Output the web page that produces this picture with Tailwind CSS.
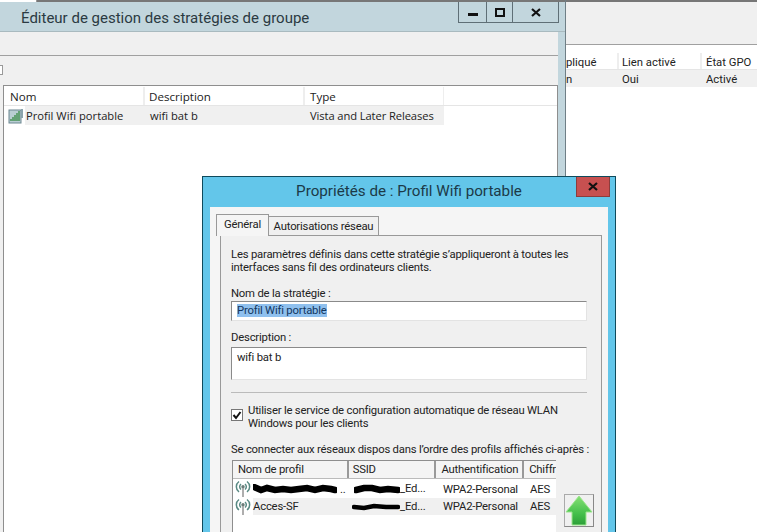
<!DOCTYPE html>
<html lang="fr">
<head>
    <meta charset="UTF-8">
    <title>Propriétés de : Profil Wifi portable</title>
    <script src="https://cdn.jsdelivr.net/npm/@tailwindcss/browser@4"></script>
</head>
<body class="bg-white">
<div class="relative w-[757px] h-[532px] overflow-hidden bg-white font-['Roboto',sans-serif] text-[11.3px] text-[#222]">

    <!-- Window behind: links list -->
    <div class="absolute left-[566px] top-0 w-[191px] h-[532px] bg-white">
        <div class="h-[44px] bg-[#f0f0f0] border-t-2 border-[#777]"></div>
        <div class="h-[9px] border-t border-[#a0a0a0] bg-white"></div>
        <div class="flex h-[17px] border-b border-[#e5e5e5] leading-[19px]">
            <div class="w-[53px] overflow-hidden border-r-2 border-[#eee] whitespace-nowrap">pliqué</div>
            <div class="w-[83px] pl-[3px] border-r-2 border-[#eee]">Lien activé</div>
            <div class="pl-[4px]">État GPO</div>
        </div>
        <div class="flex h-[17px] bg-[#f0f0f0] leading-[19px]">
            <div class="w-[53px]">n</div>
            <div class="w-[83px] pl-[3px]">Oui</div>
            <div class="pl-[4px]">Activé</div>
        </div>
    </div>

    <!-- Group policy editor window -->
    <div class="absolute left-0 top-0 w-[566px] h-[532px] flex flex-col border-r border-[#6f7f86] bg-[#c2d6dd]">
        <div class="h-[2px] flex shrink-0 bg-[#777]">
            <div class="w-[37px] bg-white border-r border-[#999]"></div>
        </div>
        <div class="h-[30px] shrink-0 flex justify-between border-b border-[#a9babf]">
            <div class="pl-[21px] text-[15px] leading-[32px] text-[#2b3a42]">Éditeur de gestion des stratégies de groupe</div>
            <div class="flex h-[21px] mr-[6px] border border-t-0 border-[#5f6f76]">
                <div class="w-[28px] border-r border-[#5f6f76] flex items-center justify-center">
                    <svg width="10" height="10" viewBox="0 0 10 10"><rect y="6" width="10" height="3" fill="#111"/></svg>
                </div>
                <div class="w-[26px] border-r border-[#5f6f76] flex items-center justify-center">
                    <svg width="10" height="9" viewBox="0 0 10 9"><rect x="1" y="1" width="8" height="7" fill="none" stroke="#111" stroke-width="2"/></svg>
                </div>
                <div class="w-[45px] flex items-center justify-center">
                    <svg width="10" height="9" viewBox="0 0 10 9"><path d="M1 1 L9 8 M9 1 L1 8" stroke="#111" stroke-width="2.2"/></svg>
                </div>
            </div>
        </div>
        <div class="flex-1 mr-[7px] flex flex-col bg-[#f0f0f0]">
            <div class="h-[24px] shrink-0 border-b border-[#a0a0a0]"></div>
            <div class="h-[29px] shrink-0 flex items-center">
                <div class="w-[3px] h-[10px] border border-l-0 border-[#999] bg-white mt-[-2px]"></div>
            </div>
            <div class="flex-1 ml-[3px] bg-white border-t border-l border-r border-[#8e8e8e] font-['Open_Sans',sans-serif] text-[11.2px]">
                <div class="flex h-[20px] pt-[1px] border-b border-[#e5e5e5] leading-[20px] text-[11.6px]">
                    <div class="w-[141px] pl-[6px] border-r-2 border-[#eee]">Nom</div>
                    <div class="w-[160px] pl-[4px] border-r-2 border-[#eee]">Description</div>
                    <div class="w-[139px] pl-[5px] border-r border-[#eee]">Type</div>
                </div>
                <div class="flex h-[19px] w-[440px] items-center leading-[19px]">
                    <div class="w-[21px] h-full bg-white flex items-center pl-[4px]">
                        <svg width="16" height="16" viewBox="0 0 16 16">
                            <rect x="1" y="2" width="12" height="13" fill="#b9cdd3" stroke="#6d8791"/>
                            <path d="M13 1 h2 v9 h-2 z" fill="#8ba4ad"/>
                            <path d="M3 13v-2M5 13v-4M7 13V7M9 13V5M11 13V3" stroke="#3f8f4e" stroke-width="1.4"/>
                        </svg>
                    </div>
                    <div class="flex flex-1 h-full bg-[#f0f0f0]">
                        <div class="w-[122px] pl-[1px]">Profil Wifi portable</div>
                        <div class="w-[160px] pl-[3px]">wifi bat b</div>
                        <div class="pl-[3px] tracking-[-0.1px]">Vista and Later Releases</div>
                    </div>
                </div>
            </div>
        </div>
    </div>

    <!-- Properties dialog -->
    <div class="absolute left-[202px] top-[176px] w-[414px] h-[370px] bg-[#63c6ea] border border-[#0f4a5c]">
        <div class="relative h-[30px] text-center text-[15.2px] leading-[29px] text-[#1c3a48]">
            <span>Propriétés de : Profil Wifi portable</span>
            <div class="absolute right-[5px] top-0 w-[34px] h-[20px] bg-[#c75050] border border-t-0 border-[#8c3c3c] flex items-center justify-center">
                <svg width="10" height="9" viewBox="0 0 10 9"><path d="M1 1 L9 8 M9 1 L1 8" stroke="#111" stroke-width="2.2"/></svg>
            </div>
        </div>
        <div class="mx-[7px] h-[340px] bg-[#f5f5f5] pl-[6px] pt-[7px] tracking-[-0.2px]">
            <!-- Tabs -->
            <div class="flex items-end h-[21px] relative z-10">
                <div class="w-[53px] h-[22px] -mb-[1px] bg-[#f5f5f5] border border-b-0 border-[#999] text-center leading-[19px]">Général</div>
                <div class="w-[110px] h-[19px] border border-l-0 border-b-0 border-[#999] bg-[#f0f0f0] text-center leading-[19px]">Autorisations réseau</div>
            </div>
            <!-- Panel -->
            <div class="ml-[4px] w-[382px] h-[300px] bg-[#f0f0f0] border border-[#999] pl-[10px] pr-[14px] pt-[12px]">
                <p class="leading-[13px]">Les paramètres définis dans cette stratégie s’appliqueront à toutes les<br>interfaces sans fil des ordinateurs clients.</p>
                <p class="mt-[13px] leading-[13px]">Nom de la stratégie :</p>
                <div class="mt-[1px] h-[20px] bg-white border border-[#8a8a8a] border-r-[#e3e3e3] border-b-[#e3e3e3] pl-[5px] leading-[18px]">
                    <span class="bg-[#8fc0ee] text-[#12365e]">Profil Wifi portable</span>
                </div>
                <p class="mt-[10px] leading-[13px]">Description :</p>
                <div class="mt-[3px] h-[33px] bg-white border border-[#8a8a8a] border-r-[#e3e3e3] border-b-[#e3e3e3] pl-[5px] leading-[20px]">wifi bat b</div>
                <div class="mt-[12px] h-[1px] bg-[#bbb]"></div>
                <div class="mt-[11px] flex gap-[5px]">
                    <div class="mt-[5px] w-[12px] h-[12px] bg-white border border-[#777] flex items-center justify-center shrink-0">
                        <svg width="10" height="10" viewBox="0 0 10 10"><path d="M1.5 5 L4 8 L8.5 2" fill="none" stroke="#111" stroke-width="2"/></svg>
                    </div>
                    <p class="leading-[13px]">Utiliser le service de configuration automatique de réseau WLAN<br>Windows pour les clients</p>
                </div>
                <p class="mt-[13px] leading-[13px] whitespace-nowrap">Se connecter aux réseaux dispos dans l’ordre des profils affichés ci-après :</p>
                <div class="relative mt-[4px]">
                    <div class="ml-[1px] w-[324px] h-[90px] bg-white border border-[#8e8e8e] border-b-0 border-r-0 overflow-hidden">
                        <div class="flex h-[18px] bg-[#f4f4f4] border-b border-[#bbb] leading-[18px] whitespace-nowrap">
                            <div class="w-[116px] pl-[5px] border-r-2 border-[#999]">Nom de profil</div>
                            <div class="w-[88px] pl-[4px] border-r-2 border-[#999]">SSID</div>
                            <div class="w-[88px] pl-[5px] border-r-2 border-[#999]">Authentification</div>
                            <div class="pl-[5px]">Chiffr</div>
                        </div>
                        <div class="flex h-[19px] leading-[22px] whitespace-nowrap">
                            <div class="w-[20px] pl-[2px] pt-[1px] shrink-0">
                                <svg width="16" height="18" viewBox="0 0 16 18"><g fill="none" stroke="#5a8a84" stroke-width="1.5"><path d="M4 1.5 A6.5 6.5 0 0 0 4 12"/><path d="M12 1.5 A6.5 6.5 0 0 1 12 12"/><path d="M6 4 A3.5 3.5 0 0 0 6 9.5"/><path d="M10 4 A3.5 3.5 0 0 1 10 9.5"/></g><circle cx="8" cy="6.8" r="1.7" fill="#6b7b78"/><path d="M8 8v9" stroke="#9a9a9a" stroke-width="1.6"/></svg>
                            </div>
                            <div class="w-[98px] flex items-center">
                                <!-- redacted in the original with a marker stroke -->
                                <svg width="84" height="10" viewBox="0 0 84 10" class="shrink-0"><path d="M1 3 L8 6 L14 4 L22 6 L30 5 L38 6 L46 5 L54 4 L62 6 L70 4 L78 5 L82 6" fill="none" stroke="#000" stroke-width="6.5" stroke-linecap="round"/></svg><span class="ml-[3px] leading-[14px] pt-[3px]">..</span>
                            </div>
                            <div class="w-[88px] flex items-center pl-[3px]">
                                <svg width="46" height="10" viewBox="0 0 46 10" class="shrink-0"><path d="M2 6 L10 4 L18 4 L26 6 L34 5 L44 6" fill="none" stroke="#000" stroke-width="6.5" stroke-linecap="round"/></svg><span>_Ed...</span>
                            </div>
                            <div class="w-[90px] pl-[4px]">WPA2-Personal</div>
                            <div class="pl-[1px]">AES</div>
                        </div>
                        <div class="flex h-[17px] leading-[18px] whitespace-nowrap">
                            <div class="w-[20px] pl-[2px] shrink-0">
                                <svg width="16" height="18" viewBox="0 0 16 18"><g fill="none" stroke="#5a8a84" stroke-width="1.5"><path d="M4 1.5 A6.5 6.5 0 0 0 4 12"/><path d="M12 1.5 A6.5 6.5 0 0 1 12 12"/><path d="M6 4 A3.5 3.5 0 0 0 6 9.5"/><path d="M10 4 A3.5 3.5 0 0 1 10 9.5"/></g><circle cx="8" cy="6.8" r="1.7" fill="#6b7b78"/><path d="M8 8v9" stroke="#9a9a9a" stroke-width="1.6"/></svg>
                            </div>
                            <div class="flex flex-1 bg-[#f0f0f0]">
                                <div class="w-[98px]">Acces-SF</div>
                                <div class="w-[88px] flex items-center pl-[1px]">
                                    <svg width="48" height="8" viewBox="0 0 48 8" class="shrink-0"><path d="M2 4 L12 5 L22 3 L34 4 L46 4" fill="none" stroke="#000" stroke-width="4.5" stroke-linecap="round"/></svg><span>_Ed...</span>
                                </div>
                                <div class="w-[90px] pl-[4px]">WPA2-Personal</div>
                                <div class="pl-[1px]">AES</div>
                            </div>
                        </div>
                    </div>
                    <!-- Move up button -->
                    <div class="absolute left-[333px] top-[34px] w-[30px] h-[33px] bg-[#f0f0f0] border border-[#aaa] border-r-[#888] border-b-[#888] flex items-center justify-center">
                        <svg width="28" height="31" viewBox="0 0 28 31">
                            <defs><linearGradient id="up" x1="0" y1="0" x2="0" y2="1"><stop offset="0" stop-color="#86e074"/><stop offset="0.6" stop-color="#45c04c"/><stop offset="1" stop-color="#2c9f38"/></linearGradient></defs>
                            <path d="M14 1 L27 17 H21 V30 H7 V17 H1 Z" fill="url(#up)" stroke="#9be68c"/>
                        </svg>
                    </div>
                </div>
            </div>
        </div>
    </div>
</div>
</body>
</html>
